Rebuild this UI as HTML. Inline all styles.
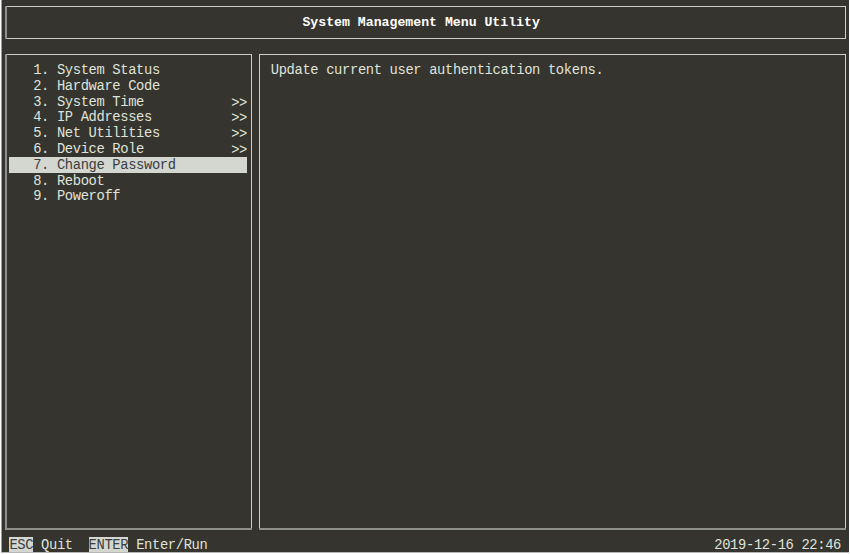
<!DOCTYPE html>
<html><head><meta charset="utf-8">
<style>
html,body{margin:0;padding:0;}
body{width:850px;height:554px;background:#ffffff;position:relative;overflow:hidden;}
#term{position:absolute;left:1px;top:0;width:848px;height:552px;background:#36342e;}
#edge1{position:absolute;left:1px;top:0;width:1px;height:553px;background:#9c9c98;}
#edge2{position:absolute;left:1px;top:552px;width:848px;height:1px;background:#b8b8b4;}
.box{position:absolute;border:1px solid #cbd0c8;box-sizing:border-box;}
.vl{position:absolute;background:#8e908b;}
.t{position:absolute;white-space:pre;font-family:"Liberation Mono",monospace;font-size:13.8px;letter-spacing:-0.36px;line-height:15.84px;height:15.84px;color:#dfe3db;}
.b{font-weight:bold;color:#ffffff;}
.hl{position:absolute;background:#d3d7cf;}
.dk{color:#3a3d3f;}
</style></head><body>
<div id="term"></div><div id="edge1"></div><div id="edge2"></div>
<!-- boxes -->
<div class="box" style="left:5px;top:6px;width:841px;height:33px;border-left:0;"></div>
<div class="box" style="left:5px;top:54px;width:247px;height:475px;border-left:0;border-bottom:0;"></div>
<div class="vl" style="left:5px;top:6px;width:2px;height:33px;"></div>
<div class="vl" style="left:5px;top:54px;width:2px;height:476px;"></div>
<div class="box" style="left:259px;top:54px;width:587px;height:475px;border-bottom:0;"></div>
<div class="vl" style="left:7px;top:528px;width:245px;height:2px;"></div>
<div class="vl" style="left:259px;top:528px;width:587px;height:2px;"></div>
<!-- highlight bars -->
<div class="hl" style="left:9px;top:157px;width:238px;height:16px;"></div>
<div class="hl" style="left:9px;top:537px;width:24px;height:15px;"></div>
<div class="hl" style="left:89px;top:537px;width:39px;height:15px;"></div>
<!-- title -->
<div class="t b" style="left:302.45px;top:15px;font-size:13.2px;letter-spacing:0;">System Management Menu Utility</div>
<!-- menu -->
<div class="t" style="left:33.17px;top:63px;">1. System Status</div>
<div class="t" style="left:33.17px;top:79px;">2. Hardware Code</div>
<div class="t" style="left:33.17px;top:95px;">3. System Time</div>
<div class="t" style="left:33.17px;top:110px;">4. IP Addresses</div>
<div class="t" style="left:33.17px;top:126px;">5. Net Utilities</div>
<div class="t" style="left:33.17px;top:142px;">6. Device Role</div>
<div class="t dk" style="left:33.17px;top:158px;">7. Change Password</div>
<div class="t" style="left:33.17px;top:174px;">8. Reboot</div>
<div class="t" style="left:33.17px;top:189px;">9. Poweroff</div>
<div class="t" style="left:231.17px;top:96px;">&gt;&gt;</div>
<div class="t" style="left:231.17px;top:111px;">&gt;&gt;</div>
<div class="t" style="left:231.17px;top:127px;">&gt;&gt;</div>
<div class="t" style="left:231.17px;top:143px;">&gt;&gt;</div>
<!-- right panel -->
<div class="t" style="left:270.77px;top:63px;">Update current user authentication tokens.</div>
<!-- footer -->
<div class="t dk" style="left:9.41px;top:538px;">ESC</div>
<div class="t" style="left:41.09px;top:538px;">Quit</div>
<div class="t dk" style="left:88.61px;top:538px;">ENTER</div>
<div class="t" style="left:136.13px;top:538px;">Enter/Run</div>
<div class="t" style="left:714.29px;top:538px;">2019-12-16 22:46</div>
</body></html>
